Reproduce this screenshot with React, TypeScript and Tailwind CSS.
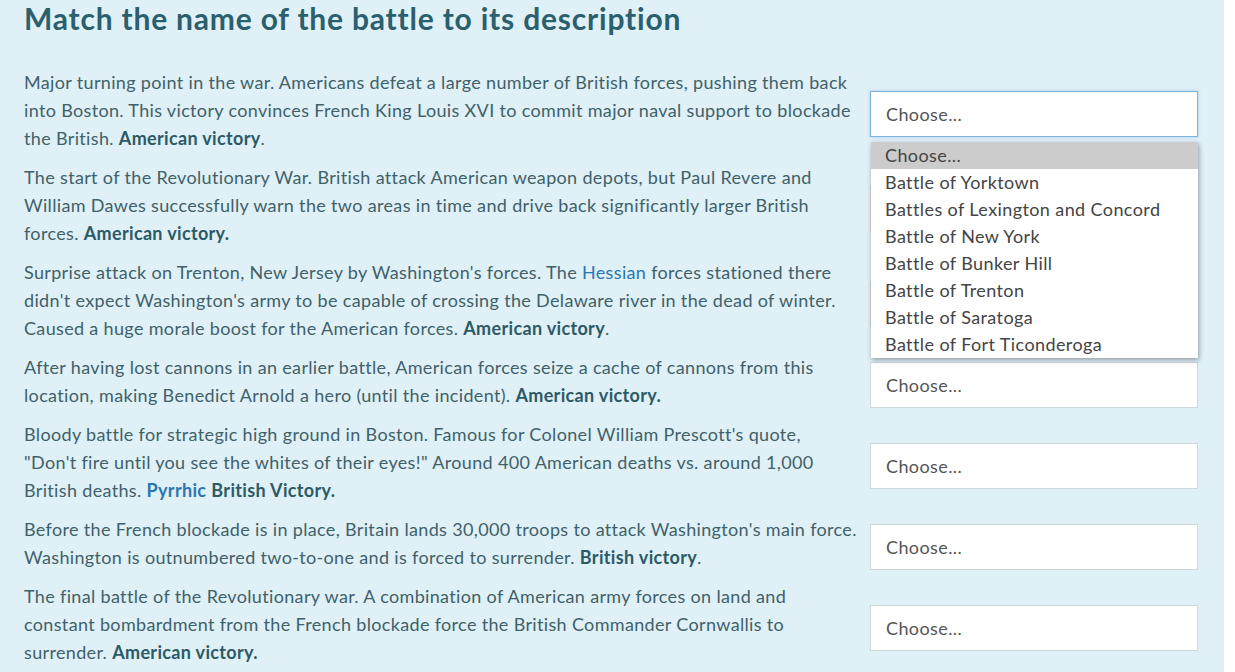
import React from 'react';

const OPTIONS = [
  'Choose...',
  'Battle of Yorktown',
  'Battles of Lexington and Concord',
  'Battle of New York',
  'Battle of Bunker Hill',
  'Battle of Trenton',
  'Battle of Saratoga',
  'Battle of Fort Ticonderoga',
];

const B = ({ children }: { children: React.ReactNode }) => (
  <b className="font-bold text-[#2c5a66]">{children}</b>
);

const A = ({ children, bold }: { children: React.ReactNode; bold?: boolean }) => (
  <a className={bold ? 'font-bold text-[#2a76b5]' : 'text-[#2a76b5]'}>{children}</a>
);

const ROWS: React.ReactNode[] = [
  <>
    Major turning point in the war. Americans defeat a large number of British forces, pushing them back
    into Boston. This victory convinces French King Louis XVI to commit major naval support to blockade
    the British. <B>American victory</B>.
  </>,
  <>
    The start of the Revolutionary War. British attack American weapon depots, but Paul Revere and
    William Dawes successfully warn the two areas in time and drive back significantly larger British
    forces. <B>American victory.</B>
  </>,
  <>
    Surprise attack on Trenton, New Jersey by Washington's forces. The <A>Hessian</A> forces stationed there
    didn't expect Washington's army to be capable of crossing the Delaware river in the dead of winter.
    Caused a huge morale boost for the American forces. <B>American victory</B>.
  </>,
  <>
    After having lost cannons in an earlier battle, American forces seize a cache of cannons from this
    location, making Benedict Arnold a hero (until the incident). <B>American victory.</B>
  </>,
  <>
    Bloody battle for strategic high ground in Boston. Famous for Colonel William Prescott's quote,
    "Don't fire until you see the whites of their eyes!" Around 400 American deaths vs. around 1,000
    British deaths. <A bold>Pyrrhic</A> <B>British Victory.</B>
  </>,
  <>
    Before the French blockade is in place, Britain lands 30,000 troops to attack Washington's main force.
    Washington is outnumbered two-to-one and is forced to surrender. <B>British victory</B>.
  </>,
  <>
    The final battle of the Revolutionary war. A combination of American army forces on land and
    constant bombardment from the French blockade force the British Commander Cornwallis to
    surrender. <B>American victory.</B>
  </>,
];

function Select({ open }: { open?: boolean }) {
  return (
    <div className="relative mt-[8px] tracking-[0.4px]">
      <div
        className={
          open
            ? 'h-[46px] w-[328px] bg-white border border-[#80b3da] shadow-[0_0_3px_rgba(100,160,210,0.45)] flex items-center px-[15px] text-[18px] text-[#555]'
            : 'h-[46px] w-[328px] bg-white border border-[#cfd8dc] flex items-center px-[15px] text-[18px] text-[#555]'
        }
      >
        Choose...
      </div>
      {open && (
        <div className="absolute left-[1px] top-[51px] z-10 w-[327px] bg-white shadow-[1px_2px_5px_rgba(0,0,0,0.35)] overflow-hidden">
          {OPTIONS.map((o, i) => (
            <div
              key={o}
              className={
                i === 0
                  ? 'h-[27px] leading-[27px] px-[14px] text-[18px] text-[#444] bg-[#cccccc]'
                  : 'h-[27px] leading-[27px] px-[14px] text-[18px] text-[#444]'
              }
            >
              {o}
            </div>
          ))}
        </div>
      )}
    </div>
  );
}

export default function App() {
  return (
    <div className="w-[1235px] min-h-[672px] bg-white font-['Lato','Liberation_Sans',sans-serif]">
      <div className="w-[1224px] min-h-[672px] bg-[#dff0f7] pl-[24px] pr-[26px]">
        <h1 className="text-[30px] leading-[36px] tracking-[0.8px] font-bold text-[#2c5f6e]">
          Match the name of the battle to its description
        </h1>
        <div className="mt-[32px] flex flex-col gap-[11px]">
          {ROWS.map((r, i) => (
            <div key={i} className="flex items-center gap-[12px]">
              <p className="w-[834px] text-[18px] leading-[28px] tracking-[0.34px] text-[#3f6169]">{r}</p>
              <Select open={i === 0} />
            </div>
          ))}
        </div>
      </div>
    </div>
  );
}
